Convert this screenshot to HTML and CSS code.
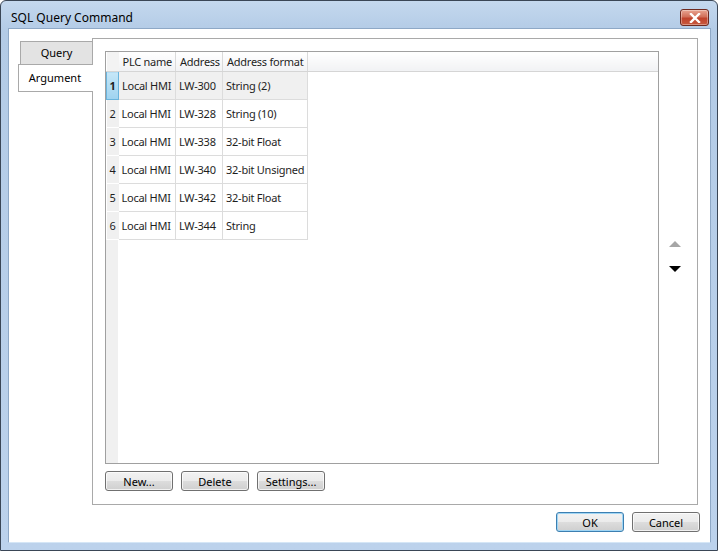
FILE: index.html
```html
<!DOCTYPE html>
<html lang="en">
<head>
    <meta charset="UTF-8">
    <title>SQL Query Command</title>
    <link rel="stylesheet" href="styles.css">
</head>
<body>
    <div class="window">
        <div class="titlebar">
            <span class="title">SQL Query Command</span>
            <button class="close-btn">
                <svg width="12" height="10" viewBox="0 0 12 10">
                    <path d="M2 1 L10 9 M10 1 L2 9" stroke="#fff" stroke-width="2.4" stroke-linecap="square"/>
                </svg>
            </button>
        </div>

        <div class="client">
            <div class="tab-area">
                <div class="tabs">
                    <div class="tab">Query</div>
                    <div class="tab active">Argument</div>
                </div>

                <div class="panel">
                    <div class="panel-top">
                        <div class="grid">
                            <table>
                                <colgroup>
                                    <col class="col-row">
                                    <col class="col-plc">
                                    <col class="col-addr">
                                    <col class="col-format">
                                    <col>
                                </colgroup>
                                <thead>
                                    <tr>
                                        <th class="rowhead"></th>
                                        <th>PLC name</th>
                                        <th>Address</th>
                                        <th>Address format</th>
                                        <th class="filler"></th>
                                    </tr>
                                </thead>
                                <tbody>
                                    <tr class="selected">
                                        <td class="rowhead">1</td>
                                        <td>Local HMI</td>
                                        <td>LW-300</td>
                                        <td>String (2)</td>
                                        <td class="filler"></td>
                                    </tr>
                                    <tr>
                                        <td class="rowhead">2</td>
                                        <td>Local HMI</td>
                                        <td>LW-328</td>
                                        <td>String (10)</td>
                                        <td class="filler"></td>
                                    </tr>
                                    <tr>
                                        <td class="rowhead">3</td>
                                        <td>Local HMI</td>
                                        <td>LW-338</td>
                                        <td>32-bit Float</td>
                                        <td class="filler"></td>
                                    </tr>
                                    <tr>
                                        <td class="rowhead">4</td>
                                        <td>Local HMI</td>
                                        <td>LW-340</td>
                                        <td>32-bit Unsigned</td>
                                        <td class="filler"></td>
                                    </tr>
                                    <tr>
                                        <td class="rowhead">5</td>
                                        <td>Local HMI</td>
                                        <td>LW-342</td>
                                        <td>32-bit Float</td>
                                        <td class="filler"></td>
                                    </tr>
                                    <tr>
                                        <td class="rowhead">6</td>
                                        <td>Local HMI</td>
                                        <td>LW-344</td>
                                        <td>String</td>
                                        <td class="filler"></td>
                                    </tr>
                                </tbody>
                            </table>
                            <div class="grid-rest"></div>
                        </div>

                        <!-- Move row up / down -->
                        <div class="order">
                            <span class="arrow up"></span>
                            <span class="arrow down"></span>
                        </div>
                    </div>

                    <div class="grid-buttons">
                        <button class="btn">New...</button>
                        <button class="btn">Delete</button>
                        <button class="btn">Settings...</button>
                    </div>
                </div>
            </div>

            <div class="footer">
                <button class="btn default">OK</button>
                <button class="btn">Cancel</button>
            </div>
        </div>
    </div>
</body>
</html>
```

FILE: styles.css
```css
/* General Styling */
body {
    margin: 0;
    padding: 0;
    font-family: "Noto Sans", "Open Sans", sans-serif;
    font-size: 11px;
    color: #1e1e1e;
    background-color: #fff;
}

.window {
    width: 718px;
    height: 551px;
    box-sizing: border-box;
    border: 1px solid #3a4656;
    border-radius: 6px 6px 0 0;
    background: linear-gradient(#c4d8ee, #b3cbe6 30px, #bcd2ec);
    display: flex;
    flex-direction: column;
}

/* Title bar */
.titlebar {
    height: 27px;
    display: flex;
    align-items: flex-start;
    padding: 0 8px 0 10px;
}

.title {
    flex: 1;
    font-size: 12px;
    color: #000;
    margin-top: 8px;
}

.close-btn {
    width: 29px;
    height: 17px;
    margin-top: 8px;
    padding: 0;
    border: 1px solid #6e2a20;
    border-radius: 3px;
    background: linear-gradient(#e9a592, #d2705a 45%, #c0432c 55%, #c85a3f);
    display: flex;
    align-items: center;
    justify-content: center;
    box-shadow: inset 0 0 0 1px rgba(255, 255, 255, 0.35);
}

/* Client area */
.client {
    flex: 1;
    margin: 0 6px 7px 7px;
    background-color: #fff;
    border: 1px solid #8ea8c6;
    border-bottom-color: #d5e6f6;
    display: flex;
    flex-direction: column;
    padding: 9px 12px 0 9px;
}

.tab-area {
    display: flex;
    height: 467px;
}

.tabs {
    width: 74px;
    padding-top: 3px;
    display: flex;
    flex-direction: column;
}

.tab {
    height: 22px;
    line-height: 22px;
    text-align: center;
    background-color: #e3e3e3;
    border: 1px solid #a9a9a9;
    border-bottom: none;
    border-right: none;
    margin-left: 2px;
    color: #000;
}

.tab.active {
    height: 26px;
    line-height: 26px;
    margin-left: 0;
    padding-right: 2px;
    background-color: #fff;
    border-bottom: 1px solid #a9a9a9;
    margin-right: -1px;
    position: relative;
    z-index: 1;
}

.panel {
    flex: 1;
    border: 1px solid #a9a9a9;
    padding: 12px 0 13px 12px;
    display: flex;
    flex-direction: column;
}

.panel-top {
    flex: 1;
    display: flex;
}

/* Data grid */
.grid {
    width: 552px;
    border: 1px solid #a0a0a0;
    display: flex;
    flex-direction: column;
}

table {
    width: 100%;
    table-layout: fixed;
    border-collapse: collapse;
    letter-spacing: -0.25px;
}

.col-row { width: 12px; }
.col-plc { width: 57px; }
.col-addr { width: 47px; }
.col-format { width: 85px; }

th {
    height: 19px;
    font-weight: normal;
    text-align: left;
    padding: 0 0 0 4px;
    background: linear-gradient(#fff, #f1f2f4);
    border-right: 1px solid #dadada;
    border-bottom: 1px solid #d5d5d5;
    white-space: nowrap;
    overflow: hidden;
}

td {
    height: 27px;
    padding: 0 0 0 3px;
    border-right: 1px solid #dcdcdc;
    border-bottom: 1px solid #dcdcdc;
    white-space: nowrap;
    overflow: hidden;
}

.rowhead {
    padding: 0;
    text-align: center;
    background-color: #f0f0f0;
    border-right: none;
    border-bottom-color: #fff;
}

th.rowhead {
    background: #f3f3f3;
    border-bottom-color: #d5d5d5;
}

th.filler,
td.filler {
    border-right: none;
}

td.filler {
    border-bottom: none;
    background-color: #fff;
}

tr.selected td {
    background-color: #f0f0f0;
}

tr.selected td.filler {
    background-color: #fff;
}

tr.selected td.rowhead {
    background: linear-gradient(#c6e7f8, #9fd3f0);
    border: 1px solid #6bb4dc;
    font-weight: bold;
}

.grid-rest {
    flex: 1;
    border-left: 12px solid #f0f0f0;
}

.order {
    flex: 1;
    display: flex;
    flex-direction: column;
    align-items: center;
    padding-top: 190px;
    padding-right: 6px;
    gap: 19px;
}

.arrow {
    width: 0;
    height: 0;
    border-left: 6px solid transparent;
    border-right: 6px solid transparent;
}

.arrow.up {
    border-bottom: 6px solid #a6a6a6;
}

.arrow.down {
    border-top: 6px solid #000;
}

/* Buttons */
.btn {
    width: 68px;
    height: 20px;
    padding: 0;
    font-family: inherit;
    font-size: 11px;
    color: #000;
    border: 1px solid #707070;
    border-radius: 3px;
    background: linear-gradient(#f2f2f2, #ebebeb 50%, #dddddd 50%, #cfcfcf);
    box-shadow: inset 0 0 0 1px rgba(255, 255, 255, 0.7);
}

.btn.default {
    border-color: #3c7fb1;
    box-shadow: inset 0 0 0 1px #9fd5f4;
}

.grid-buttons {
    display: flex;
    gap: 8px;
    margin-top: 7px;
}

.footer {
    display: flex;
    justify-content: flex-end;
    gap: 8px;
    margin-top: 7px;
    margin-right: -2px;
}
```
